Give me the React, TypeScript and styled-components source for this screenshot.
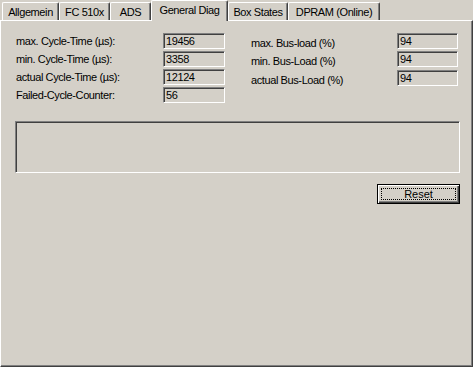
import React from "react";
import styled, { createGlobalStyle } from "styled-components";

const Global = createGlobalStyle`
  html, body { margin: 0; padding: 0; background: #d4d0c8; }
  body { font-family: "Liberation Sans", Arial, sans-serif; font-size: 11px; color: #000; }
`;

const Window = styled.div`
  width: 473px;
  height: 367px;
  background: #d4d0c8;
  display: flex;
  flex-direction: column;
  letter-spacing: -0.4px;
  overflow: hidden;
`;

const TabStrip = styled.div`
  height: 20px;
  display: flex;
  align-items: flex-end;
  padding-left: 2px;
  flex-shrink: 0;
`;

const Tab = styled.div<{ $w: number; $active?: boolean }>`
  box-sizing: border-box;
  width: ${(p) => p.$w}px;
  height: ${(p) => (p.$active ? 21 : 18)}px;
  margin-bottom: ${(p) => (p.$active ? -1 : 0)}px;
  position: relative;
  z-index: ${(p) => (p.$active ? 2 : 1)};
  background: #d4d0c8;
  border-left: 1px solid #ffffff;
  border-top: 1px solid #ffffff;
  border-right: 1px solid #404040;
  box-shadow: inset -1px 0 0 #808080;
  border-top-left-radius: 2px;
  border-top-right-radius: 2px;
  display: flex;
  justify-content: center;
  padding-top: ${(p) => (p.$active ? 3 : 3)}px;
  line-height: 13px;
  white-space: nowrap;
`;

const Panel = styled.div`
  box-sizing: border-box;
  flex: 1;
  border-left: 1px solid #ffffff;
  border-top: 1px solid #ffffff;
  border-right: 1px solid #404040;
  border-bottom: 1px solid #404040;
  box-shadow: inset -1px -1px 0 #808080;
  padding: 12px 0 0 14px;
  display: flex;
  flex-direction: column;
`;

const Stats = styled.div`
  display: flex;
  padding-left: 1px;
`;

const StatGrid = styled.div<{ $labelW: number; $fieldW: number; $rows: string; $ml?: number }>`
  display: grid;
  grid-template-columns: ${(p) => p.$labelW}px ${(p) => p.$fieldW}px;
  grid-template-rows: ${(p) => p.$rows};
  align-items: start;
  margin-left: ${(p) => p.$ml ?? 0}px;
`;

const Label = styled.div<{ $drop?: number }>`
  height: 16px;
  line-height: 16px;
  padding-top: ${(p) => p.$drop ?? 0}px;
  white-space: nowrap;
`;

const Field = styled.div`
  box-sizing: border-box;
  height: 16px;
  border-top: 1px solid #808080;
  border-left: 1px solid #808080;
  border-bottom: 1px solid #ffffff;
  border-right: 1px solid #ffffff;
  box-shadow: inset 1px 1px 0 #404040;
  padding-left: 2px;
  line-height: 15px;
  white-space: nowrap;
  overflow: hidden;
`;

const MessageBox = styled.div`
  box-sizing: border-box;
  width: 445px;
  height: 52px;
  margin-top: 18px;
  border-top: 1px solid #808080;
  border-left: 1px solid #808080;
  border-bottom: 1px solid #ffffff;
  border-right: 1px solid #ffffff;
  box-shadow: inset 1px 1px 0 #404040;
`;

const ButtonRow = styled.div`
  width: 445px;
  display: flex;
  justify-content: flex-end;
  margin-top: 11px;
`;

const Button = styled.div`
  box-sizing: border-box;
  width: 83px;
  height: 20px;
  border: 1px solid #000;
  background: #d4d0c8;
  box-shadow: inset 1px 1px 0 #ffffff, inset -1px -1px 0 #404040, inset -2px -2px 0 #808080;
  display: flex;
  padding: 3px;
`;

const Focus = styled.div`
  flex: 1;
  border: 1px dotted #000;
  display: flex;
  align-items: center;
  justify-content: center;
  line-height: 11px;
  letter-spacing: 0;
`;

const tabs = [
  { label: "Allgemein", w: 57 },
  { label: "FC 510x", w: 51 },
  { label: "ADS", w: 41 },
  { label: "General Diag", w: 77, active: true },
  { label: "Box States", w: 60 },
  { label: "DPRAM (Online)", w: 92 },
];

const left = [
  ["max. Cycle-Time (µs):", "19456"],
  ["min. Cycle-Time (µs):", "3358"],
  ["actual Cycle-Time (µs):", "12124"],
  ["Failed-Cycle-Counter:", "56"],
];

const right = [
  ["max. Bus-load (%)", "94"],
  ["min. Bus-Load (%)", "94"],
  ["actual Bus-Load (%)", "94"],
];

export default function App() {
  return (
    <>
      <Global />
      <Window>
        <TabStrip>
          {tabs.map((t) => (
            <Tab key={t.label} $w={t.w} $active={t.active}>
              {t.label}
            </Tab>
          ))}
        </TabStrip>
        <Panel>
          <Stats>
            <StatGrid $labelW={147} $fieldW={62} $rows="18px 18px 18px 16px">
              {left.map(([l, v]) => (
                <React.Fragment key={l}>
                  <Label>{l}</Label>
                  <Field>{v}</Field>
                </React.Fragment>
              ))}
            </StatGrid>
            <StatGrid $labelW={146} $fieldW={61} $rows="18px 19px 16px" $ml={26}>
              {right.map(([l, v]) => (
                <React.Fragment key={l}>
                  <Label $drop={2}>{l}</Label>
                  <Field>{v}</Field>
                </React.Fragment>
              ))}
            </StatGrid>
          </Stats>
          <MessageBox />
          <ButtonRow>
            <Button>
              <Focus>Reset</Focus>
            </Button>
          </ButtonRow>
        </Panel>
      </Window>
    </>
  );
}
